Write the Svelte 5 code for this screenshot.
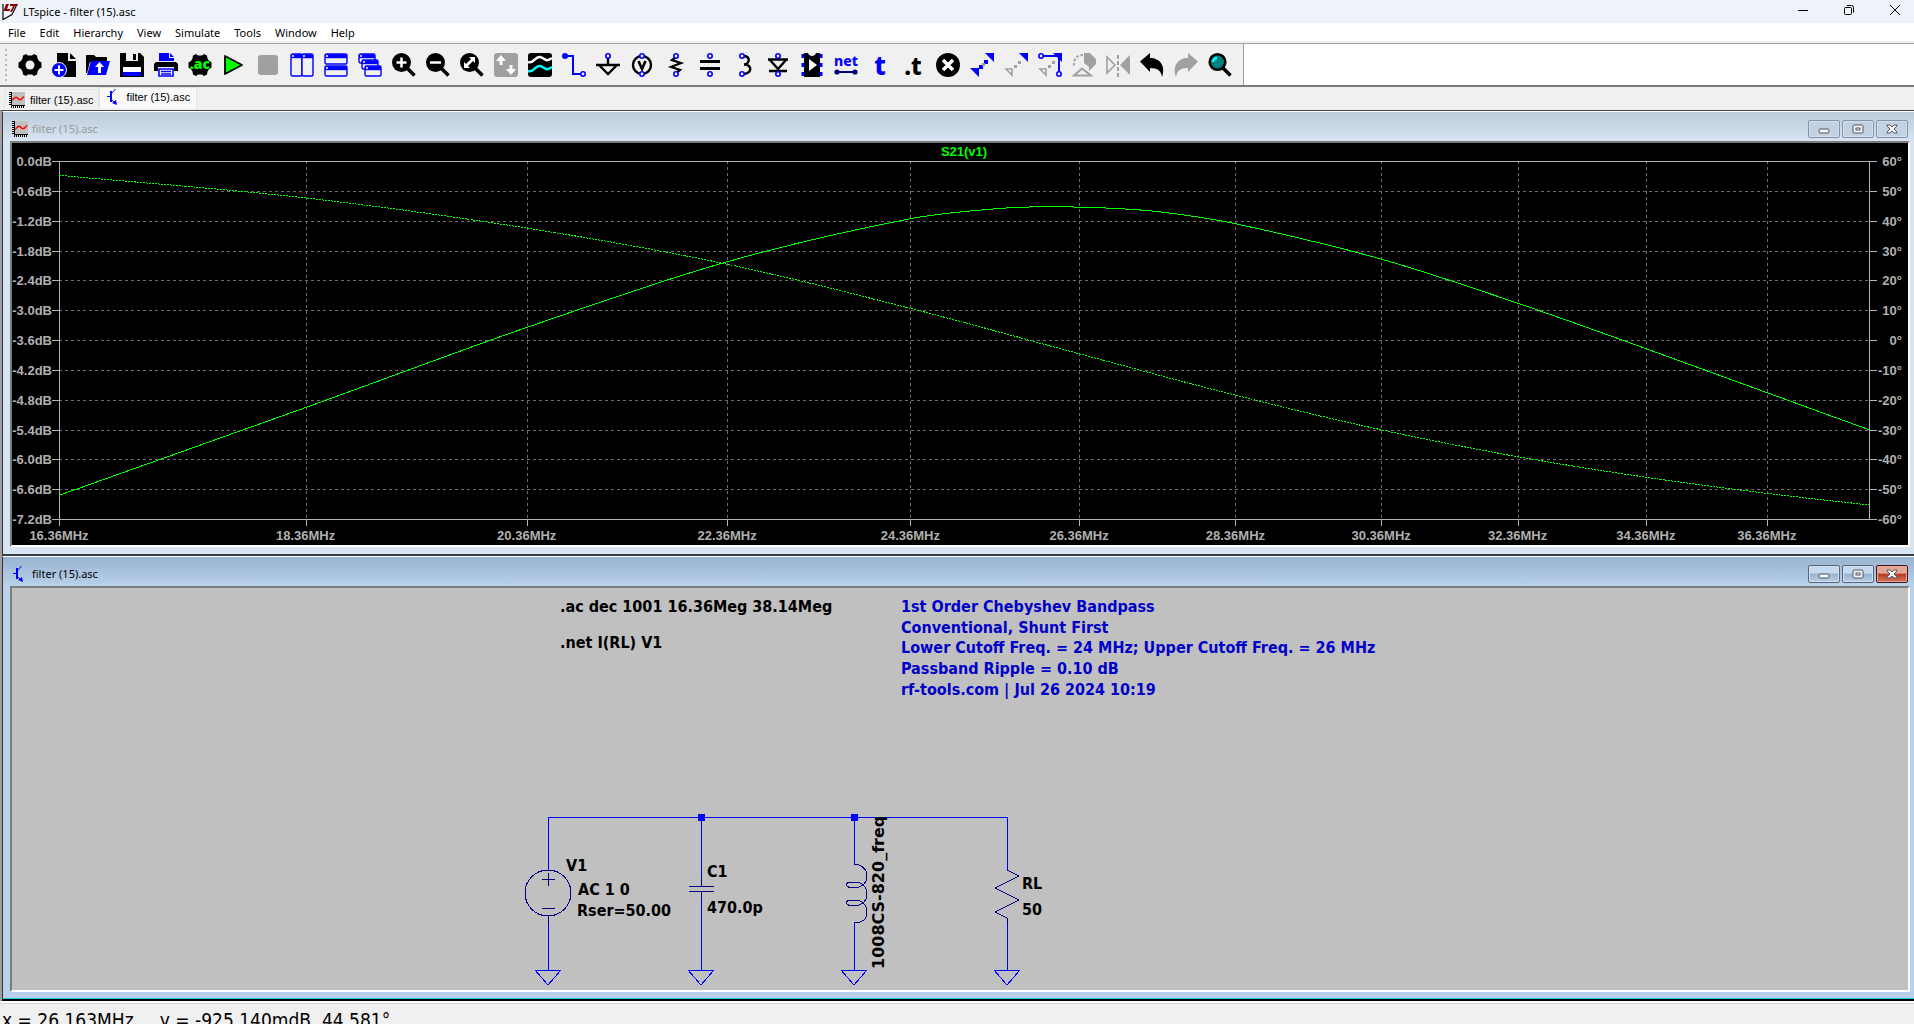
<script lang="ts">
  interface Tool {
    label: string;
    art: string;
    disabled?: boolean;
  }

  type Point = [number, number];

  const menus = ['File', 'Edit', 'Hierarchy', 'View', 'Simulate', 'Tools', 'Window', 'Help'];

  const gear =
    '<path d="M8 1l2 1.500h4l2-1.500 3 1.500 .5 3 1.500 2.500 2.500 1.500v5l-2.500 1.500-1.500 2.500-.5 3-3 1.500-2-1.500h-4l-2 1.500-3-1.500-.5-3-1.500-2.500-2.500-1.500v-5l2.500-1.500 1.500-2.500 .5-3z"/>';
  const lens =
    '<circle cx="9.500" cy="9.500" r="9.500"/><path d="M15 15l7.500 7.500" stroke="#000" stroke-width="3.500"/>';
  const pin = (x: number, y: number) =>
    `<circle cx="${x}" cy="${y}" r="2.200" fill="#f0f0f0" stroke="#00f" stroke-width="1.600"/>`;
  const pane = (x: number, y: number, w: number, h: number) =>
    `<rect x="${x}" y="${y}" width="${w}" height="${h}" rx="1.500" fill="#f0f0f0" stroke="#00f" stroke-width="1.400"/><path d="M${x} ${y + 2.2}h${w}" stroke="#00f" stroke-width="4"/><path d="M${x + 1} ${y + 2}h2" stroke="#fff" stroke-width="1.500"/>`;

  const tools: Tool[] = [
    { label: 'Settings', art: gear + '<circle cx="12" cy="12" r="4.500" fill="#f0f0f0"/>' },
    {
      label: 'New schematic',
      art: '<path d="M5 0h11v8h8v16h-19z"/><path d="M18 0l6 6h-6z"/><circle cx="7" cy="17" r="7.500" fill="#00f" stroke="#f0f0f0"/><path d="M7 12.500v9M2.500 17h9" stroke="#fff" stroke-width="2"/>',
    },
    {
      label: 'Open',
      art: '<path d="M0 2h8l2 2h11v5h-17l-3 11h-1z"/><path d="M5 8h19l-4 14h-19z" fill="#00f"/><path d="M12 20v-6h-3l4.500-5 4.500 5h-3v6z" fill="#fff"/>',
    },
    {
      label: 'Save',
      art: '<path d="M0 0h20l4 4v20h-24z"/><path d="M6 0h12v8h-12z" fill="#f0f0f0"/><path d="M13 1h3v6h-3z"/><path d="M3 14h18v5h-18z" fill="#fff"/><path d="M3 19h18v4h-18z" fill="#00f"/>',
    },
    {
      label: 'Print',
      art: '<path d="M5 0h10v5h5v3h-15z" fill="#00f"/><path d="M16 0l4 4h-4z" fill="#00f"/><path d="M2 9h20l2 2v7h-4v-4h-16v4h-4v-7z"/><path d="M5 16h14v7h-14z" fill="#fff" stroke="#00f" stroke-width="1.600"/><path d="M7 18.500h10M7 21h10" stroke="#00f" stroke-width="1.300"/>',
    },
    {
      label: 'Configure analysis',
      art:
        gear +
        '<text x="12" y="16" text-anchor="middle" font-family="Noto Sans" font-size="14" font-weight="900" fill="#0f0" stroke="#000" stroke-width="1" paint-order="stroke">.ac</text>',
    },
    {
      label: 'Run',
      art: '<path d="M3 3l17 9-17 9z" fill="#0f0" stroke="#000" stroke-width="1.800" stroke-linejoin="round"/>',
    },
    { label: 'Stop', art: '<rect x="2" y="2" width="20" height="20" rx="3" fill="#a0a0a0"/>', disabled: true },
    { label: 'Tile vertically', art: pane(1, 1, 11, 22) + pane(12, 1, 11, 22) },
    { label: 'Tile horizontally', art: pane(1, 1, 22, 10) + pane(1, 13, 22, 10) },
    { label: 'Cascade', art: pane(1, 1, 16, 9) + pane(4, 7, 16, 9) + pane(7, 13, 16, 10) },
    { label: 'Zoom in', art: lens + '<path d="M9.500 4.500v10M4.500 9.500h10" stroke="#fff" stroke-width="2.500"/>' },
    { label: 'Zoom out', art: lens + '<path d="M4 9.500h11" stroke="#fff" stroke-width="2.500"/>' },
    {
      label: 'Zoom to fit',
      art: lens + '<path d="M9 4h6v6l-2-2-5 5 2 2h-6v-6l2 2 5-5z" fill="#fff"/>',
    },
    {
      label: 'Autorange',
      art: '<rect width="24" height="24" rx="3" fill="#a0a0a0"/><path d="M7 2l5 6h-3.500v4h-3v-4h-3.500zM17 22l-5-6h3.500v-4h3v4h3.500z" fill="#fff"/>',
      disabled: true,
    },
    {
      label: 'Waveforms',
      art: '<rect width="24" height="24" rx="3"/><path d="M0 9c6 2 7-6 12-5s5 6 12 1" fill="none" stroke="#fff" stroke-width="2.500"/><path d="M0 18c6 2 7-6 12-5s5 6 12 1" fill="none" stroke="#0ff" stroke-width="2.500"/>',
    },
    {
      label: 'Wire',
      art:
        '<path d="M2 3h9v18h9" fill="none" stroke="#00f" stroke-width="2"/><circle cx="3" cy="3" r="3" fill="#00f"/>' +
        pin(21, 21),
    },
    {
      label: 'Ground',
      art: '<path d="M0 12h24M12 4v8M3 12l9 9 9-9" fill="none" stroke="#000" stroke-width="2.400"/>' + pin(12, 3),
    },
    {
      label: 'Voltage source',
      art:
        '<circle cx="12" cy="12" r="9" fill="none" stroke="#000" stroke-width="2.400"/><path d="M8.500 8l3.500 8 3.500-8" fill="none" stroke="#000" stroke-width="2.600"/>' +
        pin(12, 3) +
        pin(12, 21),
    },
    {
      label: 'Resistor',
      art:
        '<path d="M12 4l-4 3 9 3-10 4 9 3-4 3" fill="none" stroke="#000" stroke-width="2.200"/>' +
        pin(12, 3) +
        pin(12, 21),
    },
    {
      label: 'Capacitor',
      art: '<path d="M2 8.500h20M2 15.500h20" stroke="#000" stroke-width="3"/>' + pin(12, 3) + pin(12, 21),
    },
    {
      label: 'Inductor',
      art:
        '<path d="M11 3c8 0 7 8 1 8.500 9 0 8 9.500-1 9.500" fill="none" stroke="#000" stroke-width="2.400"/>' +
        pin(10, 3) +
        pin(10, 21),
    },
    {
      label: 'Diode',
      art:
        '<path d="M2 6.500h20M4 7l8 9 8-9M3 18h18" fill="none" stroke="#000" stroke-width="2.400"/>' +
        pin(12, 3) +
        pin(12, 21),
    },
    {
      label: 'Component',
      art: '<path d="M4 0h4c1 4 7 4 8 0h4v24h-16z"/><path d="M9 6l8 6-8 6z" fill="#fff"/><path d="M3 1v4M3 10v4M3 19v4M21 1v4M21 10v4M21 19v4" stroke="#00f" stroke-width="3"/>',
    },
    {
      label: 'Label net',
      art: '<text x="12" y="13" text-anchor="middle" font-family="Noto Sans" font-size="14" font-weight="800" fill="#00f">net</text><path d="M2 19h20" stroke="#000080" stroke-width="2"/><circle cx="3" cy="19" r="2.600" fill="#000080"/><circle cx="21" cy="19" r="2.600" fill="#000080"/>',
    },
    {
      label: 'Text',
      art: '<text x="12" y="22" text-anchor="middle" font-family="Noto Sans" font-size="26" font-weight="800" fill="#00f">t</text>',
    },
    {
      label: 'SPICE directive',
      art: '<text x="11" y="22" text-anchor="middle" font-family="Noto Sans" font-size="24" font-weight="800">.t</text>',
    },
    {
      label: 'Delete',
      art: '<circle cx="12" cy="12" r="12"/><path d="M7 7l10 10M17 7l-10 10" stroke="#fff" stroke-width="3.500"/>',
    },
    {
      label: 'Duplicate',
      art: '<path d="M15 0h9v9zM0 15h9v9z" fill="#00f"/><path d="M9 12h4v4h-4zM14 7h4v4h-4z" fill="#00f"/><path d="M12 10h3v3h-3z" fill="#a0a0a0"/>',
    },
    {
      label: 'Move',
      art: '<path d="M15 0h9v9z" fill="#00f"/><path d="M2 16h6v6z" fill="none" stroke="#a0a0a0" stroke-width="1.600"/><path d="M10 12h3v3h-3zM14 8h3v3h-3z" fill="#a0a0a0"/>',
    },
    {
      label: 'Drag',
      art:
        '<path d="M15 0h9v9z" fill="#00f"/><path d="M3 3h18v18" fill="none" stroke="#00f" stroke-width="2"/><path d="M2 16h6v6z" fill="none" stroke="#a0a0a0" stroke-width="1.600"/><path d="M10 12h3v3h-3zM14 8h3v3h-3z" fill="#a0a0a0"/>' +
        pin(3, 3) +
        pin(21, 21),
    },
    {
      label: 'Rotate',
      art: '<path d="M12 0h6l6 6v5l-7 7v-4l-5-4z" fill="#a0a0a0"/><path d="M11 2c-6 0-10 4-9 12" fill="none" stroke="#a0a0a0" stroke-width="2" stroke-dasharray="2.500 2"/><path d="M2 22.500l8-7 9 7z" fill="none" stroke="#a0a0a0" stroke-width="2"/>',
      disabled: true,
    },
    {
      label: 'Mirror',
      art: '<path d="M24 2v20l-10-10z" fill="#a0a0a0"/><path d="M1 4v16l8-8z" fill="none" stroke="#a0a0a0" stroke-width="1.600"/><path d="M12 2v22" stroke="#a0a0a0" stroke-width="2" stroke-dasharray="4 2"/>',
      disabled: true,
    },
    { label: 'Undo', art: '<path d="M0 8.500l10-8.500v5c10 0 16 8 12 19-1-6-4-9-12-9v4z"/>' },
    {
      label: 'Redo',
      art: '<path d="M24 8.500l-10-8.500v5c-10 0-16 8-12 19 1-6 4-9 12-9v4z" fill="#a0a0a0"/>',
      disabled: true,
    },
    {
      label: 'Find',
      art: '<path d="M15 15l7.500 7.500" stroke="#000" stroke-width="3.500"/><circle cx="9.500" cy="9" r="7.800" fill="#008080" stroke="#000" stroke-width="2.600"/><path d="M5 9a4 4 0 0 1 4-4" fill="none" stroke="#0ff" stroke-width="2.500"/>',
    },
  ];

  const startFreq = 16.36;
  const endFreq = 38.14;
  const freqTicks = [16.36, 18.36, 20.36, 22.36, 24.36, 26.36, 28.36, 30.36, 32.36, 34.36, 36.36];
  const rows = Array.from({ length: 13 }, (_, i) => i);

  const gain: Point[] = [
    [16.36, -6.724], [18.36, -4.959], [20.36, -3.348], [22.36, -2.027], [24.36, -1.161],
    [25.47, -0.946], [26.1, -0.921], [26.7, -0.946], [27.36, -1.02], [28.36, -1.262],
    [30.36, -1.973], [32.36, -2.859], [34.36, -3.772], [36.36, -4.658], [38.14, -5.403],
  ];
  const phase: Point[] = [
    [16.36, 55.2], [18.36, 47.6], [20.36, 37.5], [22.36, 25.4], [24.36, 10.6], [26.36, -4.6],
    [28.36, -18.5], [30.36, -30.1], [32.36, -39.1], [34.36, -46], [36.36, -51.4], [38.14, -55.3],
  ];

  let plotWidth = $state(1896);
  let plotHeight = $state(402);

  const left = 47;
  const top = 18;
  const right = $derived(plotWidth - 39);
  const bottom = $derived(plotHeight - 26);

  function freqX(freq: number): number {
    return left + ((right - left) * Math.log(freq / startFreq)) / Math.log(endFreq / startFreq);
  }

  function rowY(row: number): number {
    return Math.round(top + ((bottom - top) * row) / 12);
  }

  // smooth curve through the samples
  function trace(points: Point[], max: number, span: number): string {
    const p = points.map(([f, v]) => [freqX(f), top + ((max - v) / span) * (bottom - top)]);
    const slope = p.map((_, i) => {
      const a = p[Math.max(i - 1, 0)];
      const b = p[Math.min(i + 1, p.length - 1)];
      return (b[1] - a[1]) / (b[0] - a[0]);
    });
    let d = `M${p[0][0]} ${p[0][1]}`;
    for (let i = 1; i < p.length; i++) {
      const dx = (p[i][0] - p[i - 1][0]) / 3;
      d += `C${p[i - 1][0] + dx} ${p[i - 1][1] + dx * slope[i - 1]} ${p[i][0] - dx} ${p[i][1] - dx * slope[i]} ${p[i][0]} ${p[i][1]}`;
    }
    return d;
  }

  const gainPath = $derived(trace(gain, 0, 7.2));
  const phasePath = $derived(trace(phase, 60, 120));

  const notes = [
    '1st Order Chebyshev Bandpass',
    'Conventional, Shunt First',
    'Lower Cutoff Freq. = 24 MHz; Upper Cutoff Freq. = 26 MHz',
    'Passband Ripple = 0.10 dB',
    'rf-tools.com | Jul 26 2024 10:19',
  ];
  const branches = [536, 689, 842, 995];
</script>

{#snippet plotIcon()}
  <svg width="16" height="16" viewBox="0 0 16 16" aria-hidden="true">
    <path d="M3 0h13v13h-13z" fill="#c0c0c0" />
    <path d="M2.500 0v13.500h13.500" fill="none" stroke="#000" />
    <path d="M1 0v14" stroke="#000" stroke-width="2" stroke-dasharray="1 1" />
    <path d="M2 15h14" stroke="#000" stroke-width="2" stroke-dasharray="1 1" />
    <path d="M3 8.500l3-3h2l2 2h2l3-3" fill="none" stroke="#f00" stroke-width="1.400" />
  </svg>
{/snippet}

{#snippet schematicIcon()}
  <svg width="16" height="16" viewBox="0 0 16 16" aria-hidden="true">
    <path d="M1 7.500h4M9.500 0l-4.500 5M5 10l5 5" fill="none" stroke="#00f" />
    <path d="M5 2v11" stroke="#00f" stroke-width="2" />
    <path d="M11 16l-5-2 4-3z" fill="#00f" />
  </svg>
{/snippet}

{#snippet captionButtons()}
  <div class="caption-buttons">
    <button type="button" aria-label="Minimize">
      <svg width="16" height="12" viewBox="0 0 16 12"><rect x="3" y="6" width="10" height="4" rx="1" /></svg>
    </button>
    <button type="button" aria-label="Maximize">
      <svg width="16" height="12" viewBox="0 0 16 12">
        <rect x="3" y="2" width="10" height="8" rx="1" /><rect x="6" y="5" width="4" height="2" />
      </svg>
    </button>
    <button type="button" class="close" aria-label="Close">
      <svg width="16" height="12" viewBox="0 0 16 12">
        <path d="M3 2h3l2 2 2-2h3v1l-3 3 3 3v1h-3l-2-2-2 2h-3v-1l3-3-3-3z" />
      </svg>
    </button>
  </div>
{/snippet}

<div class="app">
  <header class="titlebar">
    <svg width="16" height="18" viewBox="0 0 16 18" aria-hidden="true">
      <path d="M1 1v15.500l9-5 5-10" fill="#f8f8f8" stroke="#000" stroke-width="1.200" />
      <path d="M4 1h3l-2 5h3l-.5 2h-6zM8 1h8l-1 2h-2l-3 6h-2l3-6h-3z" fill="#8b0000" />
    </svg>
    <h1>LTspice - filter (15).asc</h1>
    <div class="window-buttons">
      <button type="button" aria-label="Minimize">
        <svg width="12" height="12" viewBox="0 0 12 12"><path d="M1 6.500h10" /></svg>
      </button>
      <button type="button" aria-label="Restore">
        <svg width="12" height="12" viewBox="0 0 12 12">
          <rect x="1.500" y="3.500" width="7" height="7" rx="1" /><path d="M4 1.500h4.500a2 2 0 0 1 2 2v5" />
        </svg>
      </button>
      <button type="button" aria-label="Close">
        <svg width="12" height="12" viewBox="0 0 12 12"><path d="M1 1l10 10M11 1l-10 10" /></svg>
      </button>
    </div>
  </header>

  <nav class="menubar">
    {#each menus as menu}
      <button type="button">{menu}</button>
    {/each}
  </nav>

  <div class="toolbar-band">
    <div class="toolbar" role="toolbar" aria-label="Tools">
      <span class="grip"></span>
      {#each tools as tool (tool.label)}
        <button type="button" aria-label={tool.label} disabled={tool.disabled}>
          <svg width="24" height="24" viewBox="0 0 24 24">{@html tool.art}</svg>
        </button>
      {/each}
    </div>
  </div>

  <div class="tabs" role="tablist">
    <button type="button" role="tab" aria-selected="false" class="tab">
      {@render plotIcon()}
      filter (15).asc
    </button>
    <button type="button" role="tab" aria-selected="true" class="tab active">
      {@render schematicIcon()}
      filter (15).asc
    </button>
  </div>

  <main class="mdi">
    <section class="child">
      <div class="caption">
        {@render plotIcon()}
        <h2>filter (15).asc</h2>
        {@render captionButtons()}
      </div>
      <div class="content plot" bind:clientWidth={plotWidth} bind:clientHeight={plotHeight}>
        <svg width="100%" height="100%">
          <text class="trace-name" x={(left + right) / 2} y="13" text-anchor="middle">S21(v1)</text>
          <g class="grid">
            {#each rows.slice(1, -1) as row}
              <line x1={left} x2={right} y1={rowY(row)} y2={rowY(row)} />
            {/each}
            {#each freqTicks.slice(1) as freq}
              <line x1={Math.round(freqX(freq))} x2={Math.round(freqX(freq))} y1={top} y2={bottom} />
            {/each}
          </g>
          <g class="axes">
            <rect x={left} y={top} width={right - left} height={bottom - top} />
            {#each rows as row}
              <line x1={left - 7} x2={left} y1={rowY(row)} y2={rowY(row)} />
              <line x1={right} x2={right + 8} y1={rowY(row)} y2={rowY(row)} />
            {/each}
            {#each freqTicks as freq}
              <line x1={Math.round(freqX(freq))} x2={Math.round(freqX(freq))} y1={bottom} y2={bottom + 7} />
            {/each}
          </g>
          <g class="labels">
            {#each rows as row}
              <text x={left - 7} y={rowY(row) + 5} text-anchor="end">{(row * -0.6 || 0).toFixed(1)}dB</text>
              <text x={right + 33} y={rowY(row) + 5} text-anchor="end">{60 - row * 10}°</text>
            {/each}
            {#each freqTicks as freq}
              <text x={freqX(freq)} y={bottom + 21} text-anchor="middle">{freq.toFixed(2)}MHz</text>
            {/each}
          </g>
          <path class="trace" d={gainPath} />
          <path class="trace dotted" d={phasePath} />
        </svg>
      </div>
    </section>

    <section class="child focused">
      <div class="caption">
        {@render schematicIcon()}
        <h2>filter (15).asc</h2>
        {@render captionButtons()}
      </div>
      <div class="content schematic">
        <svg width="100%" height="100%">
          <text x="548" y="24">.ac dec 1001 16.36Meg 38.14Meg</text>
          <text x="548" y="60">.net I(RL) V1</text>
          {#each notes as note, i}
            <text class="note" x="889" y={24 + Math.round(i * 20.7)}>{note}</text>
          {/each}

          <g class="wire">
            <path d="M536 282V229H995V282M689 229V290M842 229V276M536 336V382M689 312V382M842 335V382M995 336V382" />
            {#each branches as x}
              <path d="M{x - 13} 382h26l-13 15z" />
            {/each}
          </g>
          <g class="node">
            <rect x="686" y="226" width="7" height="7" />
            <rect x="839" y="226" width="7" height="7" />
          </g>
          <g class="symbol">
            <circle cx="536" cy="305" r="23" />
            <path d="M530 291h13M536 285v13M530 320h13M536 328v8" />
            <path d="M689 290v8M677 298h25M677 303h25M689 303v9" />
            <path
              d="M842 276C850 276 855 282 855 288C855 296 848 300 842 300C837 300 834 298 834 297C834 295 838 294 842 294C850 294 855 299 855 306C855 314 848 318 842 318C837 318 834 316 834 315C834 313 838 312 842 312C850 312 855 317 855 324C855 331 850 335 842 335"
            />
            <path d="M995 282l12 6-24 12 24 12-24 12 12 6v6" />
          </g>

          <text x="554" y="283">V1</text>
          <text x="566" y="307">AC 1 0</text>
          <text x="565" y="328">Rser=50.00</text>
          <text x="695" y="289">C1</text>
          <text x="695" y="325">470.0p</text>
          <text class="model" transform="translate(872 381) rotate(-90)">1008CS-820_freq</text>
          <text x="1010" y="301">RL</text>
          <text x="1010" y="327">50</text>
        </svg>
      </div>
    </section>
  </main>

  <footer class="statusbar">
    <span>x = 26.163MHz</span>
    <span>y = -925.140mdB, 44.581°</span>
  </footer>
</div>

<style>
  :global(body) {
    margin: 0;
    overflow: hidden;
  }

  .app {
    display: flex;
    flex-direction: column;
    height: 100vh;
    background: #f0f0f0;
    color: #000;
    font-family: 'Noto Sans', sans-serif;
    font-size: 11px;
  }

  button {
    display: flex;
    align-items: center;
    justify-content: center;
    margin: 0;
    padding: 0;
    border: 0;
    background: none;
    color: inherit;
    font: inherit;
  }

  svg {
    display: block;
    flex: none;
  }

  h1,
  h2 {
    margin: 0;
    font-size: 11px;
    font-weight: 400;
  }

  .titlebar {
    display: flex;
    align-items: center;
    flex: none;
    height: 23px;
    padding-left: 2px;
    gap: 5px;
    background: #eef3fa;
  }

  .window-buttons {
    display: flex;
    gap: 8px;
    height: 20px;
    margin-left: auto;
    align-self: flex-start;
  }

  .window-buttons button {
    width: 38px;
  }

  .window-buttons svg {
    fill: none;
    stroke: #000;
  }

  .menubar {
    display: flex;
    flex: none;
    height: 18px;
    padding-left: 1px;
    background: #fff;
    border-bottom: 2px solid #f0f0f0;
  }

  .menubar button {
    padding: 0 7px;
  }

  .toolbar-band {
    flex: none;
    background: #fff;
    border-top: 1px solid #a0a0a0;
    border-bottom: 2px solid #7a7a7a;
  }

  .toolbar {
    display: flex;
    align-items: center;
    width: max-content;
    height: 41px;
    padding-right: 6px;
    background: #f0f0f0;
    border-right: 1px solid #a0a0a0;
  }

  .grip {
    width: 2px;
    height: 32px;
    margin: 0 6px 0 5px;
    background: repeating-linear-gradient(#b8b8b8 0 2px, transparent 2px 5px);
  }

  .toolbar button {
    width: 34px;
    height: 36px;
  }

  .toolbar svg {
    overflow: visible;
  }

  .tabs {
    display: flex;
    align-items: flex-end;
    flex: none;
    height: 23px;
    padding-left: 4px;
    font-family: 'Liberation Sans', Arial, sans-serif;
  }

  .tab {
    height: 20px;
    margin-bottom: 1px;
    padding: 0 4px;
    gap: 5px;
    border: 1px solid #e4e4e4;
    border-bottom: 0;
  }

  .tab.active {
    height: 21px;
    margin-bottom: 2px;
    padding: 0 6px 2px;
    background: #f9f9f9;
  }

  .mdi {
    display: flex;
    flex-direction: column;
    flex: 1;
    min-height: 0;
    border-top: 1px solid #444;
    border-left: 2px solid #a0a0a0;
  }

  .child {
    display: flex;
    flex-direction: column;
    flex: 1;
    min-height: 0;
    box-sizing: border-box;
    padding: 0 4px 7px 7px;
    border-top: 1px solid #fff;
    border-bottom: 2px solid #3c3c46;
    border-left: 1px solid #333;
    background: linear-gradient(#bccbda, #d7e4f2 29px);
  }

  .child.focused {
    border-bottom-color: #000;
    background: linear-gradient(#99b4d1, #b9d1ea 29px);
    box-shadow: inset 0 -1px #24c8e8;
  }

  .caption {
    display: flex;
    align-items: center;
    flex: none;
    box-sizing: border-box;
    height: 29px;
    padding: 4px 2px 0;
    gap: 4px;
    color: #999;
  }

  .focused .caption {
    color: #000;
  }

  .caption-buttons {
    display: flex;
    gap: 2px;
    margin-left: auto;
  }

  .caption-buttons button {
    box-sizing: border-box;
    width: 32px;
    height: 18px;
    border: 1px solid #8393ae;
    border-radius: 2px;
    background: #c3d2e3;
    box-shadow: inset 0 0 0 1px #d4dfec;
  }

  .caption-buttons svg {
    fill: #f4f4f4;
    stroke: #535666;
  }

  .focused .caption-buttons button {
    border-color: #56657c;
    background: linear-gradient(#c6d8eb 45%, #98b1cc 50%, #b8d0ea);
  }

  .focused .caption-buttons .close {
    border-color: #43141b;
    background: linear-gradient(#e3a596 45%, #b83a23 50%, #d5745f);
    box-shadow: inset 0 0 0 1px #e8a79a;
  }

  .content {
    flex: 1;
    min-height: 0;
    overflow: hidden;
    border: 2px solid;
    border-color: #7c7c7c #fff #fff #7c7c7c;
  }

  .plot {
    background: #000;
    font-family: 'Liberation Sans', Arial, sans-serif;
    font-size: 13px;
    font-weight: 700;
  }

  .trace-name {
    fill: #0f0;
  }

  .grid line {
    stroke: #6c6c6c;
    stroke-dasharray: 3 3;
    shape-rendering: crispEdges;
  }

  .axes {
    fill: none;
    stroke: #b4b4b4;
    shape-rendering: crispEdges;
  }

  .labels {
    fill: #b0b0b0;
  }

  .trace {
    fill: none;
    stroke: #0f0;
    shape-rendering: crispEdges;
  }

  .dotted {
    stroke-dasharray: 2 1;
  }

  .schematic {
    background: #c0c0c0;
    font-family: 'DejaVu Sans Condensed', 'Noto Sans', sans-serif;
    font-size: 16px;
    font-weight: 700;
  }

  .model {
    font-family: 'DejaVu Sans', sans-serif;
  }

  .note {
    fill: #0000c8;
  }

  .wire {
    fill: none;
    stroke: #00f;
    shape-rendering: crispEdges;
  }

  .node {
    fill: #00f;
  }

  .symbol {
    fill: none;
    stroke: #000080;
    shape-rendering: crispEdges;
  }

  .statusbar {
    display: flex;
    gap: 26px;
    flex: none;
    box-sizing: border-box;
    height: 23px;
    padding: 6px 2px 0;
    overflow: hidden;
    border-top: 2px solid #fff;
    box-shadow: inset 0 1px #d8d8d8;
    font-family: 'DejaVu Sans Condensed', 'Noto Sans', sans-serif;
    font-size: 19px;
    white-space: nowrap;
  }
</style>
